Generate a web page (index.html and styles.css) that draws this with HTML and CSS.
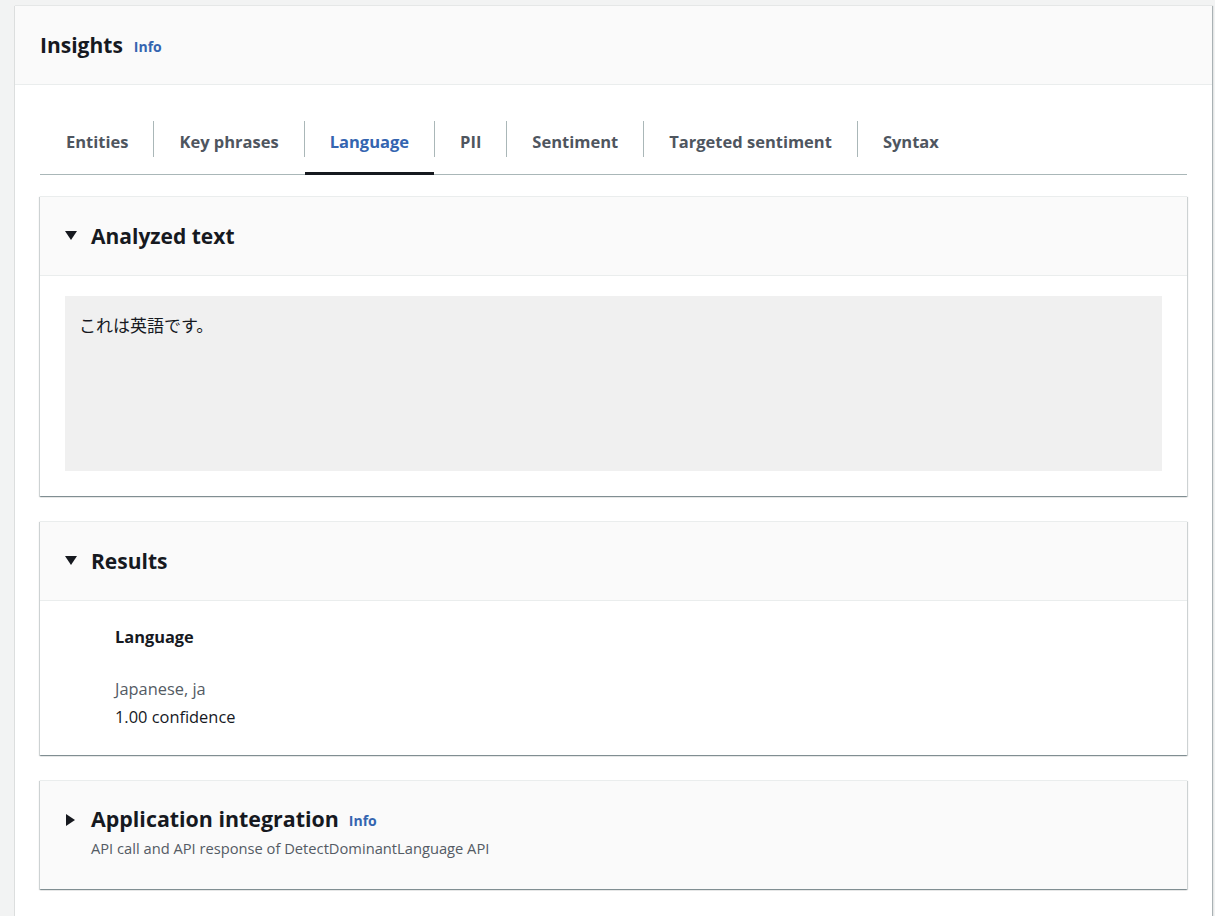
FILE: index.html
```html
<!DOCTYPE html>
<html lang="en">
<head>
<meta charset="utf-8">
<title>Insights</title>
<link rel="stylesheet" href="styles.css">
</head>
<body>
<div class="outer">
  <div class="outer-header">
    <h2 class="outer-title">Insights</h2>
    <a class="info">Info</a>
  </div>
  <div class="outer-body">
    <div class="tabs">
      <div class="tab">Entities</div>
      <div class="tab">Key phrases</div>
      <div class="tab active">Language</div>
      <div class="tab">PII</div>
      <div class="tab">Sentiment</div>
      <div class="tab">Targeted sentiment</div>
      <div class="tab">Syntax</div>
    </div>

    <div class="panel">
      <div class="panel-header">
        <svg class="caret" viewBox="0 0 12 10" width="12" height="10"><polygon points="0,0 12,0 6,9" /></svg>
        <h3 class="panel-title">Analyzed text</h3>
      </div>
      <div class="panel-body">
        <div class="textbox">これは英語です。</div>
      </div>
    </div>

    <div class="panel">
      <div class="panel-header">
        <svg class="caret" viewBox="0 0 12 10" width="12" height="10"><polygon points="0,0 12,0 6,9" /></svg>
        <h3 class="panel-title">Results</h3>
      </div>
      <div class="panel-body results">
        <div class="kv-label">Language</div>
        <div class="kv-value">Japanese, ja</div>
        <div class="kv-conf">1.00 confidence</div>
      </div>
    </div>

    <div class="panel collapsed">
      <div class="panel-header">
        <svg class="caret right" viewBox="0 0 10 12" width="10" height="12"><polygon points="0,0 9,6 0,12" /></svg>
        <div class="title-block">
          <div class="title-row">
            <h3 class="panel-title">Application integration</h3>
            <a class="info">Info</a>
          </div>
          <div class="subtitle">API call and API response of DetectDominantLanguage API</div>
        </div>
      </div>
    </div>
  </div>
</div>
</body>
</html>
```

FILE: styles.css
```css
* { box-sizing: border-box; }
html, body { margin: 0; padding: 0; }
body {
  background: #f2f3f3;
  font-family: "Open Sans", "Noto Sans", "Noto Sans CJK JP", sans-serif;
  color: #16191f;
  font-size: 14px;
  height: 916px;
  overflow: hidden;
}
.outer {
  margin: 6px 3px 0 14px;
  background: #fff;
  border-left: 1px solid #dcdede;
  box-shadow: 1px 0 1px 0 rgba(0, 28, 36, 0.3);
  min-height: 920px;
}
.outer-header {
  height: 79px;
  background: #fafafa;
  border-bottom: 1px solid #eaeded;
  display: flex;
  align-items: center;
  padding-left: 25px;
  gap: 11px;
}
.outer-title {
  margin: 0;
  font-size: 21px;
  font-weight: 700;
  line-height: 28px;
}
.info {
  color: #3465b0;
  font-size: 14px;
  font-weight: 700;
  margin-top: 3px;
}
.outer-body {
  padding: 27px 25px 0 25px;
}
.tabs {
  display: flex;
  border-bottom: 1px solid #aab7b8;
  height: 63px;
  margin-bottom: 21px;
}
.tab {
  position: relative;
  padding: 0 25px 4px 26px;
  display: flex;
  align-items: center;
  font-size: 16.5px;
  font-weight: 700;
  color: #4f565f;
}
.tab + .tab::before {
  content: "";
  position: absolute;
  left: 0;
  top: 9px;
  height: 36px;
  width: 1px;
  background: #aab7b8;
}
.tab.active {
  color: #3465b0;
}
.tab.active::after {
  content: "";
  position: absolute;
  left: 1px;
  right: 0;
  bottom: -1px;
  height: 3px;
  background: #16191f;
}
.panel {
  background: #fff;
  border-top: 1px solid #eaeded;
  box-shadow: 0 1px 1px 0 rgba(0, 28, 36, 0.3), 1px 1px 1px 0 rgba(0, 28, 36, 0.15), -1px 1px 1px 0 rgba(0, 28, 36, 0.15);
  margin-bottom: 25px;
}
.panel-header {
  height: 79px;
  background: #fafafa;
  border-bottom: 1px solid #eaeded;
  display: flex;
  align-items: center;
  padding-left: 25px;
}
.collapsed .panel-header {
  border-bottom: none;
  height: 108px;
  align-items: flex-start;
  padding-top: 24px;
}
.caret {
  fill: #16191f;
  margin-right: 14px;
  flex: none;
}
.caret.right {
  margin-top: 9px;
  margin-left: 1px;
  margin-right: 15px;
}
.panel-title {
  margin: 0;
  font-size: 21px;
  font-weight: 700;
  line-height: 28px;
}
.collapsed .panel-title {
  font-size: 21.4px;
}
.title-row {
  display: flex;
  align-items: center;
  gap: 10px;
}
.subtitle {
  font-size: 14.7px;
  color: #545b64;
  margin-top: 5px;
  line-height: 20px;
}
.panel-body {
  padding: 20px 25px 25px 25px;
}
.textbox {
  background: #f0f0f0;
  height: 175px;
  padding: 17px 14px;
  font-family: "Noto Sans CJK JP", sans-serif;
  font-size: 17px;
  line-height: 24px;
}
.results {
  padding: 25px 25px 27px 75px;
}
.kv-label {
  font-weight: 700;
  font-size: 16.4px;
  line-height: 22px;
  margin-bottom: 30px;
}
.kv-value {
  color: #545b64;
  font-size: 16.4px;
  line-height: 22px;
  margin-bottom: 6px;
}
.kv-conf {
  font-size: 16.4px;
  line-height: 22px;
}
```
